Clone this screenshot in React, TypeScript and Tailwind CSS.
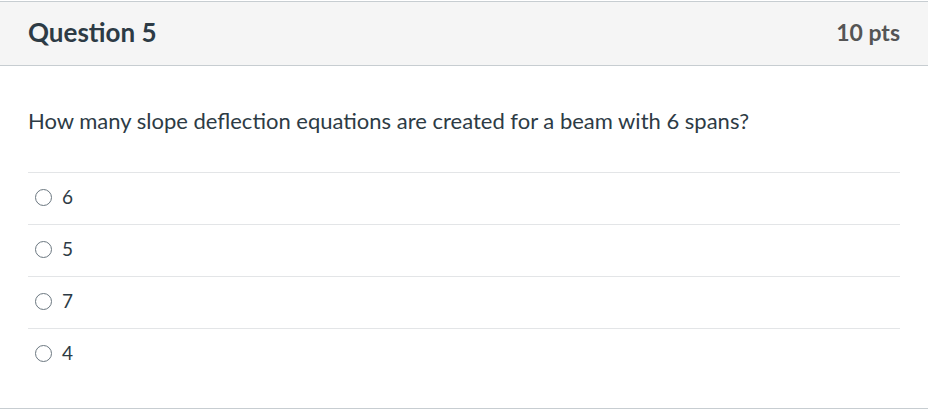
const answers = ["6", "5", "7", "4"];

export default function App() {
  return (
    <div className="h-[412px] w-[928px] bg-white pt-px font-['Lato','Liberation_Sans',sans-serif]">
      <div className="border-y border-[#c7cdd1] bg-[#f5f5f5]">
        <div className="flex h-[63px] items-center justify-between px-7 pb-[4px]">
          <h2 className="text-[26px] font-bold leading-[32px] text-[#2d3b45]">Question 5</h2>
          <div className="text-[23px] font-bold leading-[32px] text-[#555555]">10 pts</div>
        </div>
      </div>

      <div className="h-[343px] border-b border-[#c7cdd1] px-7">
        <p className="pt-[41px] text-[22px] leading-[28px] text-[#2d3b45]">
          How many slope deflection equations are created for a beam with 6 spans?
        </p>

        <div className="mt-[37px]">
          {answers.map(a => (
            <div
              key={a}
              className="flex h-[52px] items-center gap-[10px] border-t border-[#e3e5e7] pb-[3px] pl-[7px]"
            >
              <span className="h-[17px] w-[17px] rounded-full border border-[#6b7780] bg-white" />
              <span className="text-[19px] leading-[24px] text-[#2d3b45]">{a}</span>
            </div>
          ))}
        </div>
      </div>
    </div>
  );
}
